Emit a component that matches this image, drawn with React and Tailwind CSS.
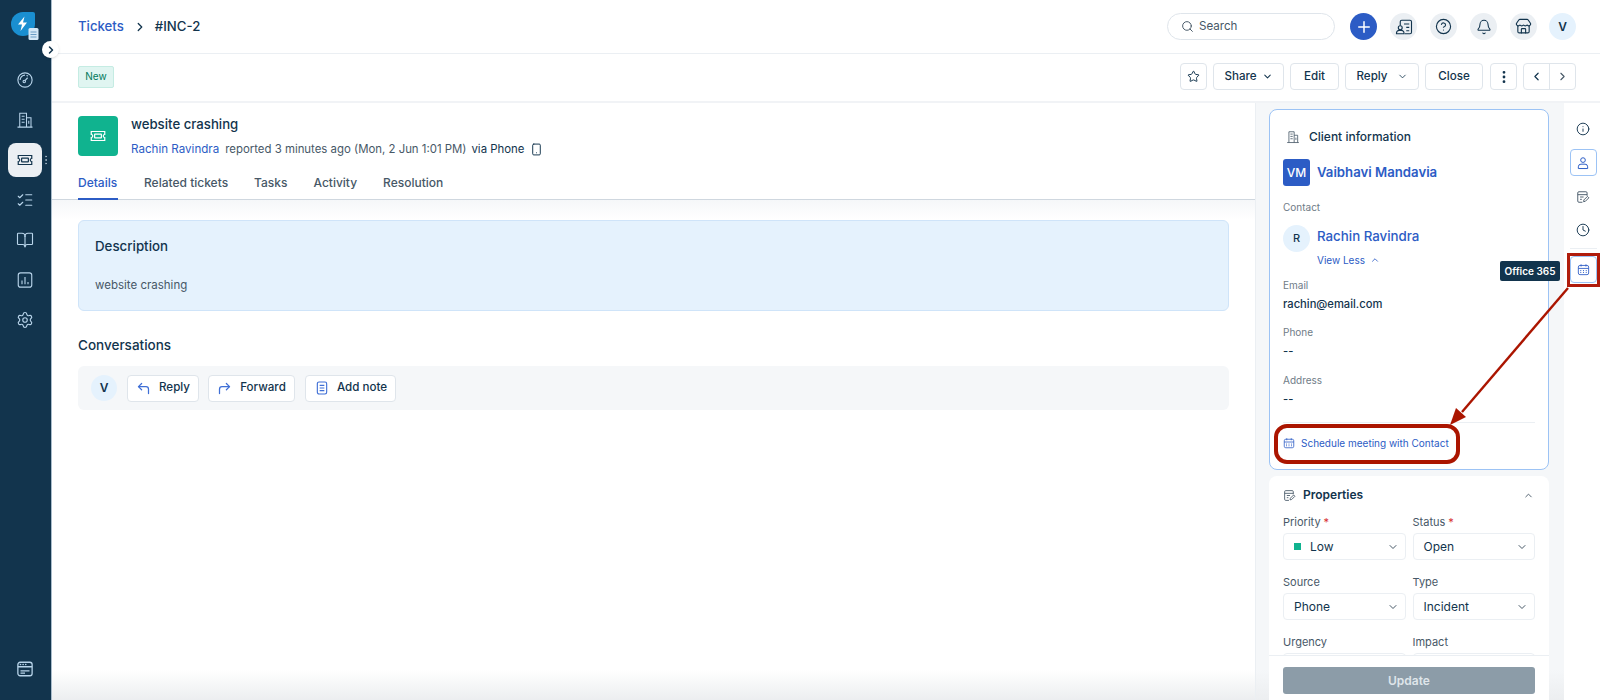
import React from "react";
import {
  Bell, BookOpen, ChevronDown, ChevronLeft, ChevronRight, ChevronUp,
  CircleHelp, Clock, CornerUpLeft, CornerUpRight, EllipsisVertical, Info, ListChecks, Plus, Search,
  Settings, Smartphone, Star, Store,
} from "lucide-react";

const TicketIcon = ({ className }) => (
  <svg viewBox="0 0 24 24" fill="none" stroke="currentColor" strokeWidth="1.6" className={className}>
    <path d="M3 6h18v4a2 2 0 0 0 0 4v4H3v-4a2 2 0 0 0 0-4z" />
    <rect x="7.5" y="9.5" width="9" height="5" rx="0.5" />
  </svg>
)

const GaugeIcon = ({ className }) => (
  <svg viewBox="0 0 24 24" fill="none" stroke="currentColor" strokeWidth="1.5" className={className}>
    <circle cx="12" cy="12" r="9.500" />
    <path d="M5.500 12a6.500 6.500 0 0 1 6.500-6.500M14 6l2 .8" />
    <circle cx="11" cy="14" r="1.600" />
    <path d="M12 12.800l3.500-3.800" />
  </svg>
)

const BuildingIcon = ({ className }) => (
  <svg viewBox="0 0 24 24" fill="none" stroke="currentColor" strokeWidth="1.4" className={className}>
    <path d="M2 21.500h20M5 21.500V3h9v18.500M14 9h6v12.500" />
    <path d="M7.500 7h4M7.500 11h4M7.500 15h4M17 13v4" />
  </svg>
)

const NoteIcon = ({ className }) => (
  <svg viewBox="0 0 24 24" fill="none" stroke="currentColor" strokeWidth="1.7" className={className}>
    <rect x="5" y="3" width="14" height="18" rx="2.5" />
    <path d="M8.500 8h7M8.500 12h7M8.500 16h7" />
  </svg>
)

const PropsIcon = ({ className }) => (
  <svg viewBox="0 0 24 24" fill="none" stroke="currentColor" strokeWidth="1.6" className={className}>
    <path d="M19 10V5a2 2 0 0 0-2-2H5a2 2 0 0 0-2 2v14a2 2 0 0 0 2 2h6" />
    <path d="M3 8h16M7 12h6M7 16h3" />
    <path d="M13 20l.6-3 6-6 2.400 2.400-6 6z" />
  </svg>
)

const ContactsIcon = ({ className }) => (
  <svg viewBox="0 0 24 24" fill="none" stroke="currentColor" strokeWidth="1.5" className={className}>
    <path d="M7 10V5a2 2 0 0 1 2-2h11a2 2 0 0 1 2 2v14a2 2 0 0 1-2 2h-7" />
    <circle cx="7" cy="13" r="2.600" />
    <path d="M2 21v-1a3.500 3.500 0 0 1 3.500-3.500h3A3.500 3.500 0 0 1 12 20v1z" />
    <path d="M12 8h7M15 12.500h4M15 17h4" />
  </svg>
)

const ReportsIcon = ({ className }) => (
  <svg viewBox="0 0 24 24" fill="none" stroke="currentColor" strokeWidth="1.5" className={className}>
    <rect x="3" y="2.500" width="18" height="19" rx="3" />
    <path d="M8 17.500v-5M12 17.500V8M16 17.500v-3" />
  </svg>
)

const AppsIcon = ({ className }) => (
  <svg viewBox="0 0 24 24" fill="none" stroke="currentColor" strokeWidth="1.7" className={className}>
    <rect x="2.500" y="3" width="19" height="18" rx="3" />
    <path d="M2.500 9h19M6 14.500h12M6 17.500h6" />
    <path d="M6 6h.01M9.500 6h.01M13 6h.01" strokeWidth="2.200" strokeLinecap="round" />
  </svg>
)

const CalendarGrid = ({ className }) => (
  <svg viewBox="0 0 24 24" fill="none" stroke="currentColor" strokeWidth="1.6" className={className}>
    <rect x="2.500" y="4.500" width="19" height="17" rx="3" />
    <path d="M2.500 10h19M7.500 2.500v4M16.500 2.500v4" />
    <path d="M7 14h.01M12 14h.01M17 14h.01M7 17.500h.01M12 17.500h.01M17 17.500h.01" strokeWidth="2.200" strokeLinecap="round" />
  </svg>
)

const PersonIcon = ({ className }) => (
  <svg viewBox="0 0 24 24" fill="none" stroke="currentColor" strokeWidth="1.7" className={className}>
    <circle cx="12" cy="7" r="4" />
    <path d="M4 21.500v-3a4.500 4.500 0 0 1 4.500-4.500h7a4.500 4.500 0 0 1 4.500 4.500v3z" />
  </svg>
)

const Logo = () => (
  <svg viewBox="0 0 28 28" className="w-[28px] h-[28px]">
    <path d="M12 0h10a2 2 0 0 1 2 2v10a12 12 0 1 1-12-12z" fill="#1a8fd1" />
    <path d="M13.500 4.500L7 12.500h4l-1.500 6.500L16 10.500h-4z" fill="#fff" />
    <rect x="17.500" y="16" width="10" height="12" rx="1.500" fill="#d5e8f7" />
    <path d="M19.500 20h6M19.500 22.500h6M19.500 25h6" stroke="#6a9cc4" strokeWidth="1" />
  </svg>
)

const navItems = [
  { icon: GaugeIcon },
  { icon: BuildingIcon },
  { icon: TicketIcon, active: true },
  { icon: ListChecks },
  { icon: BookOpen },
  { icon: ReportsIcon },
  { icon: Settings },
]

const Sidebar = () => (
  <div className="relative w-[52px] shrink-0 h-full bg-[#12344d] border-r border-[#a9bccb] flex flex-col items-center">
    <div className="mt-[12px] self-start ml-[11px]"><Logo /></div>
    <div className="absolute left-[42px] top-[41px] w-[17px] h-[17px] rounded-full bg-white z-10 flex items-center justify-center shadow">
      <ChevronRight size={12} strokeWidth={3} className="text-[#12344d]" />
    </div>
    <div className="flex flex-col items-center mt-[23px] gap-[6px] mr-[2px]">
      {navItems.map((n, i) => {
        const Icon = n.icon
        return (
          <div key={i} className={`relative w-[34px] h-[34px] flex items-center justify-center rounded-[8px] ${n.active ? "bg-[#ebeff3] text-[#12344d]" : "text-[#b8d4ea]"}`}>
            <Icon className="w-[18px] h-[18px]" strokeWidth={1.5} />
            {n.active && <EllipsisVertical size={12} className="absolute left-[32px] top-[11px] text-[#9fb3c3]" />}
          </div>
        )
      })}
    </div>
    <div className="mt-auto mb-[22px] mr-[2px] text-[#b8d4ea]"><AppsIcon className="w-[18px] h-[18px]" /></div>
  </div>
)

const RoundIcon = ({ children }) => (
  <div className="w-[27px] h-[27px] rounded-full bg-[#ebeff3] flex items-center justify-center text-[#12344d]">{children}</div>
)

const TopBar = () => (
  <div className="h-[54px] shrink-0 border-b border-[#ebeff3] flex items-center pl-[26px] pr-[24px]">
    <span className="text-[13.2px] font-medium text-[#2c5cc5]">Tickets</span>
    <ChevronRight size={14} strokeWidth={2.2} className="ml-[9px] text-[#12344d]" />
    <span className="ml-[8px] text-[13.2px] font-medium text-[#12344d]">#INC-2</span>
    <div className="ml-auto flex items-center">
      <div className="w-[168px] h-[27px] rounded-full border border-[#dfe5eb] flex items-center pl-[13px] text-[#475867]">
        <Search size={13} strokeWidth={1.8} />
        <span className="ml-[5px] text-[11.6px]">Search</span>
      </div>
      <div className="ml-[15px] w-[27px] h-[27px] rounded-full bg-[#2c5cc5] flex items-center justify-center text-white">
        <Plus size={18} strokeWidth={2} />
      </div>
      <div className="ml-[13px] flex gap-[13px]">
        <RoundIcon><ContactsIcon className="w-[18px] h-[18px]" /></RoundIcon>
        <RoundIcon><CircleHelp size={17} strokeWidth={1.6} /></RoundIcon>
        <RoundIcon><Bell size={16} strokeWidth={1.6} /></RoundIcon>
        <RoundIcon><Store size={17} strokeWidth={1.6} /></RoundIcon>
      </div>
      <div className="ml-[12px] w-[27px] h-[27px] rounded-full bg-[#e5f2fd] flex items-center justify-center text-[12px] font-semibold text-[#12344d]">V</div>
    </div>
  </div>
)

const Btn = ({ className = "", children }) => (
  <div className={`h-[27px] rounded-[4px] border border-[#dfe5eb] bg-white flex items-center justify-center text-[11.6px] font-medium text-[#12344d] ${className}`}>{children}</div>
)

const ActionBar = () => (
  <div className="h-[49px] shrink-0 border-b-2 border-[#f1f3f6] flex items-center pl-[26px] pr-[24px] pb-[2px]">
    <div className="w-[36px] h-[22px] rounded-[2px] bg-[#e0f5f1] border border-[#c5ece3] flex items-center justify-center text-[10px] text-[#00795b]">New</div>
    <div className="ml-auto flex items-center">
      <Btn className="w-[27px]"><Star size={13} strokeWidth={1.8} /></Btn>
      <Btn className="ml-[6px] w-[71px] gap-[5px]">Share <ChevronDown size={11} strokeWidth={2.2} /></Btn>
      <Btn className="ml-[6px] w-[49px]">Edit</Btn>
      <Btn className="ml-[6px] w-[74px] gap-[9px]">Reply <ChevronDown size={11} strokeWidth={1.8} /></Btn>
      <Btn className="ml-[6px] w-[58px]">Close</Btn>
      <Btn className="ml-[7px] w-[27px]"><EllipsisVertical size={16} strokeWidth={2.2} /></Btn>
      <div className="ml-[6px] h-[27px] w-[53px] rounded-[4px] border border-[#dfe5eb] flex">
        <div className="flex-1 border-r border-[#dfe5eb] flex items-center justify-center text-[#12344d]"><ChevronLeft size={13} strokeWidth={2.2} /></div>
        <div className="flex-1 flex items-center justify-center text-[#475867]"><ChevronRight size={13} strokeWidth={2} /></div>
      </div>
    </div>
  </div>
)

const MainColumn = () => (
  <div className="relative w-[1203px] shrink-0 h-full flex flex-col overflow-hidden">
    <div className="flex pl-[26px] pt-[13px]">
      <div className="w-[40px] h-[40px] rounded-[4px] bg-[#10b38f] flex items-center justify-center text-white">
        <TicketIcon className="w-[18px] h-[18px]" />
      </div>
      <div className="ml-[13px]">
        <div className="text-[13.2px] leading-[16px] font-medium text-[#12344d]">website crashing</div>
        <div className="mt-[9px] flex items-center text-[11.4px] leading-[16px] text-[#475867]">
          <span className="text-[#2c5cc5] text-[11.6px]">Rachin Ravindra</span>
          <span className="ml-[6px]">reported 3 minutes ago (Mon, 2 Jun 1:01 PM)</span>
          <span className="ml-[5px] text-[#12344d]">via Phone</span>
          <Smartphone size={13} strokeWidth={1.8} className="ml-[6px] text-[#12344d]" />
        </div>
      </div>
    </div>
    <div className="mt-[13px] h-[30px] pl-[26px] flex gap-[26px] border-b border-[#cfd7df] text-[12px] font-medium text-[#475867] shrink-0">
      <div className="relative text-[#2c5cc5] pt-[4px] w-[40px]">Details<div className="absolute left-0 right-0 bottom-[-1px] h-[2px] bg-[#2c5cc5]" /></div>
      <div className="pt-[4px]">Related tickets</div>
      <div className="pt-[4px]">Tasks</div>
      <div className="pt-[4px]">Activity</div>
      <div className="pt-[4px]">Resolution</div>
    </div>
    <div className="h-[20px] shrink-0 bg-gradient-to-b from-[#f5f7f9] to-white" />
    <div className="mx-[26px] h-[91px] shrink-0 rounded-[6px] bg-[#e5f2fd] border border-[#cfe4f9] pl-[16px] pt-[16px]">
      <div className="text-[13.3px] leading-[18px] font-medium text-[#12344d]">Description</div>
      <div className="mt-[22px] text-[11.5px] leading-[16px] text-[#475867]">website crashing</div>
    </div>
    <div className="mt-[25px] ml-[26px] text-[13.5px] leading-[18px] font-medium text-[#12344d]">Conversations</div>
    <div className="mt-[12px] mx-[26px] h-[44px] rounded-[6px] bg-[#f5f7f9] flex items-center pl-[13px]">
      <div className="w-[26px] h-[26px] rounded-full bg-[#e5f2fd] flex items-center justify-center text-[12px] font-semibold text-[#12344d]">V</div>
      <Btn className="ml-[10px] w-[72px] gap-[8px]"><CornerUpLeft size={15} className="text-[#3f6fd6]" />Reply</Btn>
      <Btn className="ml-[9px] w-[87px] gap-[8px]"><CornerUpRight size={15} className="text-[#3f6fd6]" />Forward</Btn>
      <Btn className="ml-[10px] w-[91px] gap-[7px]"><NoteIcon className="w-[16px] h-[16px] text-[#3f6fd6]" />Add note</Btn>
    </div>
    <div className="absolute left-0 right-0 bottom-0 h-[30px] bg-gradient-to-b from-transparent to-[#eceef0]" />
  </div>
)

const Label = ({ children, req }) => (
  <div className="text-[11px] leading-[14px] text-[#475867]">{children}{req && <span className="text-[#d72d30] ml-[3px]">*</span>}</div>
)

const Select = ({ children }) => (
  <div className="mt-[4px] h-[27px] rounded-[4px] border border-[#ebeff3] flex items-center pl-[10px] pr-[6px] text-[12px] text-[#12344d]">
    {children}
    <ChevronDown size={12} strokeWidth={2} className="ml-auto text-[#475867]" />
  </div>
)

const Detail = ({ label, value, className = "" }) => (
  <div className={className}>
    <div className="text-[10px] leading-[14px] text-[#6f7c87]">{label}</div>
    <div className="mt-[4px] text-[11.2px] leading-[16px] font-medium text-[#12344d]">{value}</div>
  </div>
)

const RightPanel = () => (
  <div className="relative w-[309px] shrink-0 h-full bg-[#f5f7f9] border-l border-[#ebeff3] flex flex-col">
    <div className="absolute left-0 right-0 bottom-0 h-[30px] bg-gradient-to-b from-transparent to-[#eceef0]" />
    <div className="relative flex-1 min-h-0 overflow-hidden pl-[13px] pr-[15px] pt-[6px]">
      <div className="h-[361px] rounded-[8px] border border-[#9cc3f5] bg-white px-[13px] flex flex-col">
        <div className="mt-[18px] flex items-center h-[18px]">
          <BuildingIcon className="ml-[3px] w-[14px] h-[14px] text-[#475867]" />
          <span className="ml-[9px] text-[12px] font-medium text-[#12344d]">Client information</span>
        </div>
        <div className="mt-[13px] flex items-center">
          <div className="w-[27px] h-[27px] rounded-[3px] bg-[#2c5cc5] text-white flex items-center justify-center text-[12px] font-medium">VM</div>
          <span className="ml-[7px] text-[13.2px] font-semibold text-[#2c5cc5]">Vaibhavi Mandavia</span>
        </div>
        <div className="mt-[14px] text-[10px] leading-[14px] text-[#6f7c87]">Contact</div>
        <div className="mt-[11px] flex">
          <div className="w-[27px] h-[27px] rounded-full bg-[#e5f2fd] text-[#12344d] flex items-center justify-center text-[11px] font-medium">R</div>
          <div className="ml-[7px]">
            <div className="text-[13.3px] leading-[24px] -mt-[1px] font-medium text-[#2c5cc5]">Rachin Ravindra</div>
            <div className="mt-[5px] flex items-center text-[10px] leading-[14px] text-[#2c5cc5]">View Less <ChevronUp size={10} strokeWidth={2} className="ml-[5px]" /></div>
          </div>
        </div>
        <Detail className="mt-[11px]" label="Email" value="rachin@email.com" />
        <Detail className="mt-[13px]" label="Phone" value="--" />
        <Detail className="mt-[14px]" label="Address" value="--" />
        <div className="mt-[15px] border-t border-[#ebeff3]" />
        <div className="mt-[13px] flex items-center text-[10px] leading-[14px] text-[#2c5cc5]">
          <CalendarGrid className="w-[12px] h-[12px]" />
          <span className="ml-[6px]">Schedule meeting with Contact</span>
        </div>
      </div>
      <div className="mt-[6px] rounded-[8px] bg-white px-[14px] pb-[10px]">
        <div className="h-[38px] flex items-center">
          <PropsIcon className="w-[13px] h-[13px] text-[#475867]" />
          <span className="ml-[7px] text-[12px] font-semibold text-[#12344d]">Properties</span>
          <ChevronUp size={11} strokeWidth={2} className="ml-auto mr-[1px] text-[#475867]" />
        </div>
        <div className="mt-[1px] grid grid-cols-2 gap-x-[7px] gap-y-[15px]">
          <div><Label req>Priority</Label><Select><span className="w-[7px] h-[7px] bg-[#10b38f] mr-[9px]" />Low</Select></div>
          <div><Label req>Status</Label><Select>Open</Select></div>
          <div><Label>Source</Label><Select>Phone</Select></div>
          <div><Label>Type</Label><Select>Incident</Select></div>
          <div><Label>Urgency</Label><Select>Low</Select></div>
          <div><Label>Impact</Label><Select>Low</Select></div>
        </div>
      </div>
    </div>
    <div className="relative h-[45px] shrink-0 ml-[13px] mr-[15px] bg-white border-t border-[#ebeff3] pl-[14px] pr-[14px] pt-[11px]">
      <div className="h-[27px] rounded-[3px] bg-[#8c9ca8] flex items-center justify-center text-[12px] font-semibold text-[#dfe5ea]">Update</div>
    </div>
  </div>
)

const Rail = () => (
  <div className="w-[37px] shrink-0 h-full flex flex-col items-center pt-[14px] pl-[1px] text-[#475867]">
    <div className="w-[27px] h-[27px] pb-[3px] flex items-center justify-center text-[#12344d]"><Info size={14} strokeWidth={1.6} /></div>
    <div className="mt-[5px] w-[27px] h-[27px] rounded-[4px] border border-[#9cc3f5] flex items-center justify-center text-[#2c5cc5]"><PersonIcon className="w-[14px] h-[14px]" /></div>
    <div className="mt-[7px] w-[27px] h-[27px] flex items-center justify-center"><PropsIcon className="w-[14px] h-[14px]" /></div>
    <div className="mt-[6px] w-[27px] h-[27px] flex items-center justify-center text-[#12344d]"><Clock size={14} strokeWidth={1.6} /></div>
    <div className="mt-[5px] w-[27px] border-t border-[#ebeff3]" />
    <div className="mt-[7px] w-[27px] h-[27px] rounded-[4px] border border-[#9cc3f5] flex items-center justify-center text-[#2c5cc5]"><CalendarGrid className="w-[13px] h-[13px]" /></div>
  </div>
)

const Annotations = () => (
  <>
    <div className="absolute left-[1500px] top-[261px] w-[60px] h-[20px] rounded-[2px] bg-[#12344d] text-white text-[10px] font-semibold flex items-center justify-center">Office 365</div>
    <div className="absolute left-[1567px] top-[253px] w-[33px] h-[34px] border-[3px] border-[#b01c0c]" />
    <div className="absolute left-[1274px] top-[424px] w-[186px] h-[40px] rounded-[13px] border-[4px] border-[#ab1500]" />
    <svg className="absolute left-0 top-0 pointer-events-none" width="1600" height="700">
      <path d="M1568 288L1462 412" stroke="#ab1500" strokeWidth="2.400" fill="none" />
      <path d="M1450 425l6-17 10 9z" fill="#ab1500" />
    </svg>
  </>
)

const App = () => {
  return (
    <div className="relative w-[1600px] h-[700px] flex overflow-hidden bg-white font-['Inter',sans-serif]">
      <Sidebar />
      <div className="flex-1 flex flex-col min-w-0">
        <TopBar />
        <ActionBar />
        <div className="flex-1 min-h-0 flex">
          <MainColumn />
          <RightPanel />
          <Rail />
        </div>
      </div>
      <Annotations />
    </div>
  )
}

export default App
